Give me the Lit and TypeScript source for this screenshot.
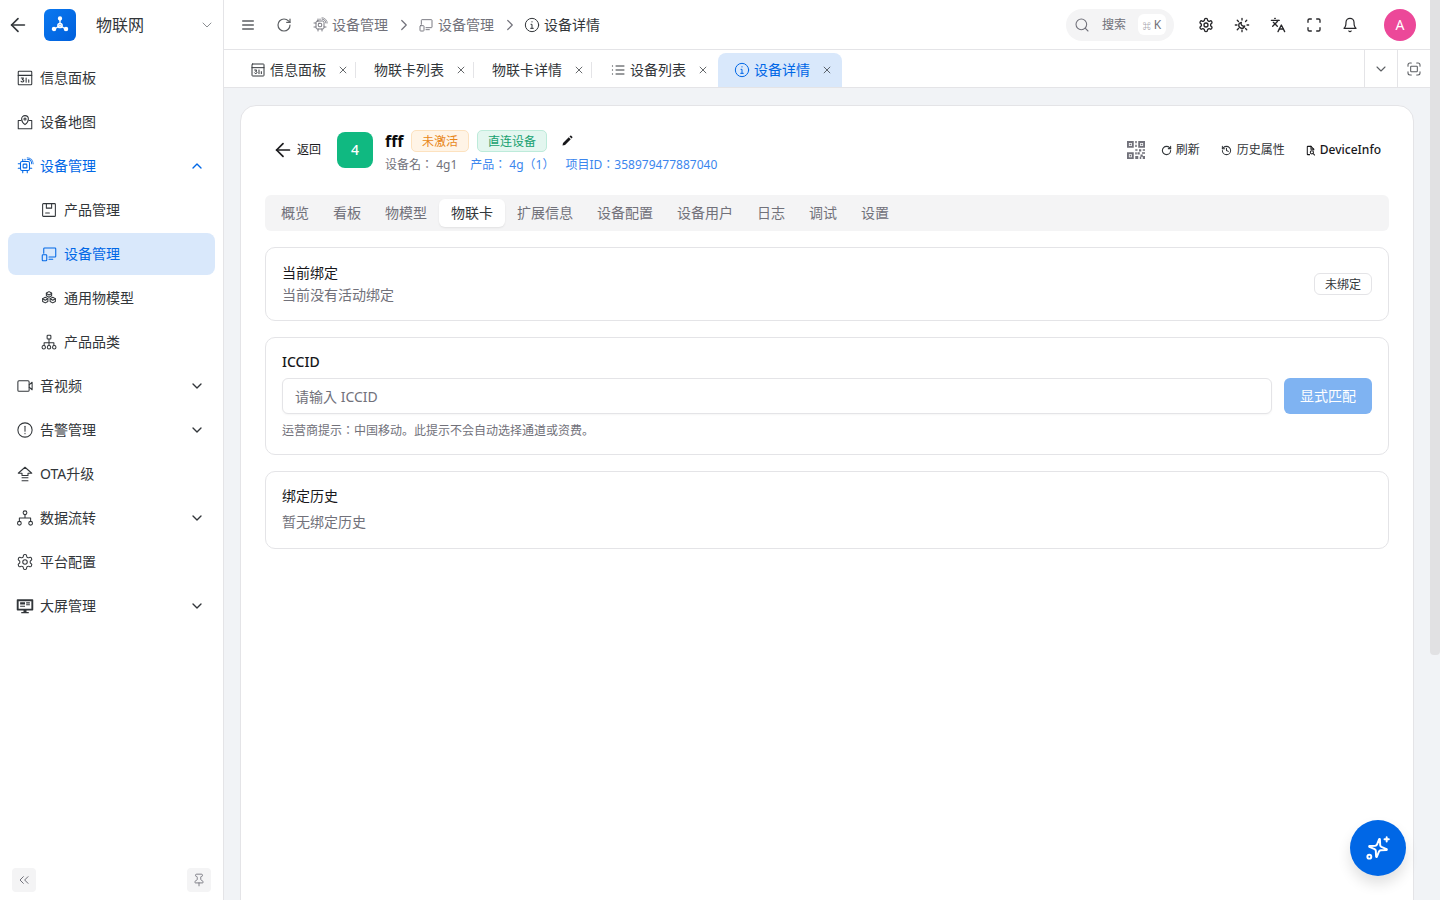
import {css, html, svg, LitElement} from 'lit';
import {customElement} from 'lit/decorators.js';

const icons = {
	back: svg`<path d="M19 12H5"/><path d="m12 19-7-7 7-7"/>`,
	chevronDown: svg`<path d="m6 9 6 6 6-6"/>`,
	chevronUp: svg`<path d="m18 15-6-6-6 6"/>`,
	chevronRight: svg`<path d="m9 6 6 6-6 6"/>`,
	close: svg`<path d="M5 5l14 14"/><path d="M19 5 5 19"/>`,
	menu: svg`<path d="M4 6h16"/><path d="M4 12h16"/><path d="M4 18h16"/>`,
	refresh: svg`<path d="M21 12a9 9 0 1 1-9-9c2.52 0 4.93 1 6.74 2.74L21 8"/><path d="M21 3v5h-5"/>`,
	panel: svg`<rect x="3" y="3" width="18" height="18" rx="1"/><path d="M3 8.5h18"/><path d="M7 12h3l-1.5 2.2c1.6 0 2 .8 2 1.5s-.7 1.6-1.8 1.6-1.7-.5-1.9-1"/><path d="M13.5 12v5.5"/><path d="M17 14.5v3"/>`,
	map: svg`<path d="M12 15.500s-4.500-3.300-4.500-7.500a4.500 4.500 0 0 1 9 0c0 4.200-4.500 7.500-4.500 7.500z"/><circle cx="12" cy="8" r="1.400"/><path d="M6.500 10H3v11h18V10h-3.500"/>`,
	chip: svg`<rect x="6" y="6" width="12" height="12" rx="2"/><rect x="9.500" y="9.500" width="5" height="5" rx="1"/><path d="M9 3v3M9 18v3M15 18v3M3 9h3M3 15h3M18 15h3M12 3v1"/><path d="M15 3a6 6 0 0 1 6 6"/><path d="M15 1a8 8 0 0 1 8 8" opacity=".7"/>`,
	box: svg`<rect x="3.500" y="3.500" width="17" height="17" rx="1"/><path d="M8.500 4v5.500h7V4"/><path d="M7.500 16h5"/>`,
	device: svg`<path d="M5 11V5a1 1 0 0 1 1-1h14a1 1 0 0 1 1 1v10a1 1 0 0 1-1 1h-8"/><path d="M12 19h5"/><rect x="3" y="13" width="6" height="8" rx="1"/>`,
	cubes: svg`<path d="M12 3.500l3.500 1.800v3.800L12 11 8.500 9.100V5.300z"/><path d="M7 11l3.500 1.800v3.800L7 18.500l-3.500-1.900v-3.800z"/><path d="M17 11l3.500 1.800v3.800L17 18.500l-3.500-1.900v-3.800z"/><path d="M3.500 13 7 15l3.500-2M13.500 13l3.500 2 3.500-2M8.500 6 12 8l3.500-2"/>`,
	tree: svg`<rect x="9.500" y="3" width="5" height="5" rx="1"/><path d="M12 8v5M5.500 16.500V13h13v3.500M12 13v3.500"/><circle cx="5" cy="19" r="2.300"/><circle cx="12" cy="19" r="2.300"/><circle cx="19" cy="19" r="2.300"/>`,
	video: svg`<rect x="2.500" y="5" width="15" height="14" rx="1.500"/><path d="M17.500 10.500 21.500 7v10l-4-3.500"/>`,
	alert: svg`<circle cx="12" cy="12" r="9.500"/><path d="M12 7v6.500"/><path d="M12 16.500v.5"/>`,
	ota: svg`<path d="M12 3 3 11h5v3h8v-3h5z"/><path d="M8 17h8"/><path d="M8 21h8"/>`,
	flow: svg`<circle cx="12" cy="5" r="2.500"/><circle cx="4.500" cy="19" r="2.500"/><circle cx="19.500" cy="19" r="2.500"/><path d="M12 7.500V12M4.500 16.500V12h15v4.500"/>`,
	gear: svg`<path d="M12.220 2h-.44a2 2 0 0 0-2 2v.18a2 2 0 0 1-1 1.730l-.43.25a2 2 0 0 1-2 0l-.15-.08a2 2 0 0 0-2.730.73l-.22.38a2 2 0 0 0 .73 2.730l.15.1a2 2 0 0 1 1 1.720v.51a2 2 0 0 1-1 1.740l-.15.09a2 2 0 0 0-.73 2.730l.22.38a2 2 0 0 0 2.730.73l.15-.08a2 2 0 0 1 2 0l.43.25a2 2 0 0 1 1 1.730V20a2 2 0 0 0 2 2h.44a2 2 0 0 0 2-2v-.18a2 2 0 0 1 1-1.730l.43-.25a2 2 0 0 1 2 0l.15.08a2 2 0 0 0 2.730-.73l.22-.39a2 2 0 0 0-.73-2.730l-.15-.08a2 2 0 0 1-1-1.740v-.5a2 2 0 0 1 1-1.740l.15-.09a2 2 0 0 0 .73-2.730l-.22-.38a2 2 0 0 0-2.730-.73l-.15.08a2 2 0 0 1-2 0l-.43-.25a2 2 0 0 1-1-1.730V4a2 2 0 0 0-2-2z"/><circle cx="12" cy="12" r="3"/>`,
	screen: svg`<path fill="currentColor" stroke="none" fill-rule="evenodd" d="M2 3h20a1 1 0 0 1 1 1v13a1 1 0 0 1-1 1h-8v2h3v1.500H7V20h3v-2H2a1 1 0 0 1-1-1V4a1 1 0 0 1 1-1zm1.500 2.500v10h17v-10zM5.500 7h6.500v3H5.500zm8 0h5v1.500h-5zm0 2.500h5V11h-5zM5.500 11.500h6.500V13H5.500z"/>`,
	info: svg`<circle cx="12" cy="12" r="10"/><path d="M10.500 11H12v6"/><path d="M10 17h4"/><path d="M12 7v.5"/>`,
	list: svg`<path d="M9 6h12M9 12h12M9 18h12"/><path d="M3.500 6h.5M3.500 12h.5M3.500 18h.5"/>`,
	search: svg`<circle cx="11" cy="11" r="8"/><path d="m21 21-4.300-4.300"/>`,
	sun: svg`<path d="M12 2v2.500M12 19.500V22M4.900 4.900l1.800 1.800M17.300 17.300l1.800 1.800M2 12h2.500M19.500 12H22M4.900 19.100l1.800-1.800M17.300 6.700l1.800-1.800"/><path d="M11 8a4.500 4.500 0 1 0 5 5.500A4 4 0 0 1 11 8z"/>`,
	lang: svg`<path d="m5 8 6 6"/><path d="m4 14 6-6 2-3"/><path d="M2 5h12"/><path d="M7 2h1"/><path d="m22 22-5-10-5 10"/><path d="M14 18h6"/>`,
	fullscreen: svg`<path d="M8 3H5a2 2 0 0 0-2 2v3"/><path d="M21 8V5a2 2 0 0 0-2-2h-3"/><path d="M3 16v3a2 2 0 0 0 2 2h3"/><path d="M16 21h3a2 2 0 0 0 2-2v-3"/>`,
	bell: svg`<path d="M6 8a6 6 0 0 1 12 0c0 7 3 9 3 9H3s3-2 3-9"/><path d="M10.300 21a1.940 1.940 0 0 0 3.400 0"/>`,
	capture: svg`<path d="M3 8V6a3 3 0 0 1 3-3h2M16 3h2a3 3 0 0 1 3 3v2M21 16v2a3 3 0 0 1-3 3h-2M8 21H6a3 3 0 0 1-3-3v-2"/><rect x="7" y="8" width="10" height="8" rx="1"/>`,
	pencil: svg`<path fill="currentColor" stroke="none" d="M3 21l1-5L15.500 4.500l4 4L8 20zM17 3l1.500-1.500a1.400 1.400 0 0 1 2 0l2 2a1.400 1.400 0 0 1 0 2L21 7z"/>`,
	history: svg`<path d="M3 12a9 9 0 1 0 9-9 9.750 9.750 0 0 0-6.740 2.740L3 8"/><path d="M3 3v5h5"/><path d="M12 7v5l4 2"/>`,
	doc: svg`<path d="M13 3H6a1 1 0 0 0-1 1v16a1 1 0 0 0 1 1h4"/><path d="M13 3l6 6v2"/><path d="M13 3v6h6"/><circle cx="15" cy="16" r="3.500"/><path d="m18 19 3 3"/>`,
	doubleLeft: svg`<path d="m11 17-5-5 5-5"/><path d="m18 17-5-5 5-5"/>`,
	pin: svg`<path d="M12 17v5"/><path d="M9 10.760a2 2 0 0 1-1.110 1.790l-1.780.9A2 2 0 0 0 5 15.240V16a1 1 0 0 0 1 1h12a1 1 0 0 0 1-1v-.76a2 2 0 0 0-1.110-1.790l-1.780-.9A2 2 0 0 1 15 10.760V7a1 1 0 0 1 1-1 2 2 0 0 0 0-4H8a2 2 0 0 0 0 4 1 1 0 0 1 1 1z"/>`,
	qr: svg`<path fill="currentColor" stroke="none" fill-rule="evenodd" d="M0 0h9v9H0zm2.500 2.500v4h4v-4zM3.500 3.500h2v2h-2zM15 0h9v9h-9zm2.500 2.500v4h4v-4zM18.500 3.500h2v2h-2zM0 15h9v9H0zm2.500 2.500v4h4v-4zM3.500 18.500h2v2h-2zM11 0h2v3h-2zM11 5h2v3h-2zM11 11h3v2h-3zM16 11h3v3h-3zM21 11h3v2h-3zM11 15h2v3h-2zM14 15h3v3h-3zM20 15h4v2h-4zM18 18h3v3h-3zM11 20h4v4h-4zM17 21h2v3h-2zM21 20h3v4h-3z"/>`,
	spark: svg`<g transform="rotate(10 12 12)"><path d="M10.500 15a2 2 0 0 0-1.400-1.400l-5-1.200a.4.400 0 0 1 0-.8l5-1.200A2 2 0 0 0 10.500 9l1.100-5a.4.400 0 0 1 .8 0l1.100 5a2 2 0 0 0 1.400 1.400l5 1.200a.4.400 0 0 1 0 .8l-5 1.200a2 2 0 0 0-1.400 1.400l-1.100 5a.4.400 0 0 1-.8 0z"/></g><path d="M20 2v4M18 4h4"/><circle cx="4" cy="20" r="1.800"/>`,
};

type IconName = keyof typeof icons;

function icon(name: IconName, size = 16, weight = 1.6) {
	return html`<svg class="icon" width=${size} height=${size} viewBox="0 0 24 24" fill="none" stroke="currentColor" stroke-width=${weight} stroke-linecap="round" stroke-linejoin="round">${icons[name]}</svg>`;
}

interface NavItem {
	label: string,
	icon: IconName,
	sub?: boolean,
	active?: boolean,
	open?: boolean,
	current?: boolean,
	caret?: boolean,
}

const nav: NavItem[] = [
	{label: '信息面板', icon: 'panel'},
	{label: '设备地图', icon: 'map'},
	{label: '设备管理', icon: 'chip', active: true, open: true},
	{label: '产品管理', icon: 'box', sub: true},
	{label: '设备管理', icon: 'device', sub: true, current: true},
	{label: '通用物模型', icon: 'cubes', sub: true},
	{label: '产品品类', icon: 'tree', sub: true},
	{label: '音视频', icon: 'video', caret: true},
	{label: '告警管理', icon: 'alert', caret: true},
	{label: 'OTA升级', icon: 'ota'},
	{label: '数据流转', icon: 'flow', caret: true},
	{label: '平台配置', icon: 'gear'},
	{label: '大屏管理', icon: 'screen', caret: true},
];

const openTabs: {label: string, icon?: IconName, active?: boolean}[] = [
	{label: '信息面板', icon: 'panel'},
	{label: '物联卡列表'},
	{label: '物联卡详情'},
	{label: '设备列表', icon: 'list'},
	{label: '设备详情', icon: 'info', active: true},
];

const detailTabs = ['概览', '看板', '物模型', '物联卡', '扩展信息', '设备配置', '设备用户', '日志', '调试', '设置'];

@customElement('app-root')
export class AppRoot extends LitElement {
	protected render() {
		return html`
		<aside class="sidebar">
			<div class="brand">
				<span class="brand-back">${icon('back', 22, 1.8)}</span>
				<span class="logo">
					<svg width="20" height="20" viewBox="0 0 20 20" fill="none" stroke="#fff" stroke-width="1.300">
						<path d="M10 4v5M4.500 14 10 10.500 15.500 14"/>
						<circle cx="10" cy="10.500" r="2.200" fill="#fff" fill-opacity=".5"/>
						<circle cx="10" cy="3.500" r="1.500" fill="#fff"/>
						<circle cx="4" cy="14" r="1.600" fill="#fff"/>
						<circle cx="16" cy="14" r="1.600" fill="#fff"/>
					</svg>
				</span>
				<span class="brand-name">物联网</span>
				<span class="brand-caret">${icon('chevronDown', 16, 1.5)}</span>
			</div>
			<nav class="menu">
				${nav.map((item) => html`
					<div class="item ${item.sub ? 'sub' : ''} ${item.active ? 'active' : ''} ${item.current ? 'current' : ''}">
						${icon(item.icon, 18, 1.4)}
						<span>${item.label}</span>
						${item.caret ? html`<span class="caret">${icon('chevronDown', 16, 2)}</span>` : ''}
						${item.open ? html`<span class="caret">${icon('chevronUp', 16, 2)}</span>` : ''}
					</div>
				`)}
			</nav>
			<div class="side-foot">
				<span class="foot-btn">${icon('doubleLeft', 16, 1.5)}</span>
				<span class="foot-btn">${icon('pin', 14, 1.5)}</span>
			</div>
		</aside>
		<div class="main">
			<header class="topbar">
				<span class="top-icon first">${icon('menu', 16, 2)}</span>
				<span class="top-icon">${icon('refresh', 16, 1.8)}</span>
				<div class="crumbs">
					<span class="crumb">${icon('chip', 16, 1.4)}设备管理</span>
					<span class="sep">${icon('chevronRight', 18, 1.6)}</span>
					<span class="crumb">${icon('device', 16, 1.4)}设备管理</span>
					<span class="sep">${icon('chevronRight', 18, 1.6)}</span>
					<span class="crumb last">${icon('info', 16, 1.5)}设备详情</span>
				</div>
				<div class="search">
					${icon('search', 16, 1.6)}
					<span class="search-label">搜索</span>
					<span class="kbd"><small>⌘</small> K</span>
				</div>
				<div class="tools">
					${icon('gear', 16, 2)}
					${icon('sun', 16, 2)}
					${icon('lang', 16, 2)}
					${icon('fullscreen', 16, 2)}
					${icon('bell', 16, 1.8)}
				</div>
				<span class="avatar">A</span>
			</header>
			<div class="tabbar">
				<div class="tabs">
					${openTabs.map((tab) => html`
						<div class="tab ${tab.active ? 'on' : ''}">
							${tab.icon ? icon(tab.icon, 16, 1.5) : ''}
							<span>${tab.label}</span>
							<span class="x">${icon('close', 10, 1.8)}</span>
						</div>
					`)}
				</div>
				<span class="tab-tool">${icon('chevronDown', 16, 1.6)}</span>
				<span class="tab-tool">${icon('capture', 16, 1.6)}</span>
			</div>
			<main class="content">
				<section class="page">
					<div class="head">
						<span class="return">${icon('back', 22, 1.9)}<span>返回</span></span>
						<span class="count">4</span>
						<div class="title-block">
							<div class="title-row">
								<b class="name">fff</b>
								<span class="chip orange">未激活</span>
								<span class="chip green">直连设备</span>
								<span class="pencil">${icon('pencil', 12)}</span>
							</div>
							<div class="meta">
								<span class="meta-grey">设备名： 4g1</span>
								<span class="meta-blue">产品： 4g（1）</span>
								<span class="meta-blue">项目ID：358979477887040</span>
							</div>
						</div>
						<div class="actions">
							<span class="qr">${icon('qr', 18)}</span>
							<span class="act">${icon('refresh', 11, 2.4)}刷新</span>
							<span class="act wide">${icon('history', 11, 2.2)}历史属性</span>
							<span class="act strong">${icon('doc', 11, 2.2)}DeviceInfo</span>
						</div>
					</div>
					<div class="detail-tabs">
						${detailTabs.map((t) => html`<span class="dtab ${t === '物联卡' ? 'on' : ''}">${t}</span>`)}
					</div>
					<div class="panel bound">
						<div>
							<div class="panel-title">当前绑定</div>
							<div class="panel-sub">当前没有活动绑定</div>
						</div>
						<span class="state">未绑定</span>
					</div>
					<div class="panel iccid">
						<div class="panel-title strong">ICCID</div>
						<div class="field">
							<input placeholder="请输入 ICCID">
							<button>显式匹配</button>
						</div>
						<div class="hint">运营商提示：中国移动。此提示不会自动选择通道或资费。</div>
					</div>
					<div class="panel history">
						<div class="panel-title">绑定历史</div>
						<div class="panel-sub">暂无绑定历史</div>
					</div>
				</section>
			</main>
		</div>
		<div class="scrollbar"><div class="thumb"></div></div>
		<button class="fab">${icon('spark', 26, 1.8)}</button>
		`;
	}

	static styles = css`
		:host {
			display: flex;
			height: 900px;
			overflow: hidden;
			position: relative;
			background: #f1f3f6;
			color: #32363a;
			font-family: "Noto Sans", "Noto Sans CJK JP", sans-serif;
			font-size: 14px;
			line-height: 20px;
		}
		.icon { flex: none; display: block; }

		.sidebar {
			width: 223px;
			flex: none;
			background: #fff;
			border-right: 1px solid #e4e4e7;
			display: flex;
			flex-direction: column;
		}
		.brand {
			height: 50px;
			display: flex;
			align-items: center;
			padding-left: 7px;
		}
		.brand-back { width: 37px; color: #32363a; }
		.logo {
			width: 32px;
			height: 32px;
			border-radius: 6px;
			background: linear-gradient(135deg, #0a78f0, #0060dc);
			display: flex;
			align-items: center;
			justify-content: center;
		}
		.brand-name { font-size: 16px; line-height: 24px; margin-left: 20px; flex: 1; }
		.brand-caret { color: #8b8e92; margin-right: 8px; }
		.menu {
			padding: 7px 8px 0;
			display: flex;
			flex-direction: column;
			gap: 2px;
			flex: 1;
		}
		.item {
			height: 42px;
			display: flex;
			align-items: center;
			gap: 6px;
			padding-left: 8px;
			border-radius: 8px;
			flex: none;
		}
		.item.sub { padding-left: 32px; }
		.item.active { color: #0067e6; }
		.item.current { color: #0067e6; background: #d9e8fb; }
		.caret { margin-left: auto; margin-right: 10px; }
		.side-foot {
			display: flex;
			justify-content: space-between;
			padding: 0 12px 8px;
		}
		.foot-btn {
			width: 24px;
			height: 24px;
			border-radius: 4px;
			background: #f4f4f5;
			color: #71717a;
			display: flex;
			align-items: center;
			justify-content: center;
		}

		.main { flex: 1; min-width: 0; display: flex; flex-direction: column; }
		.topbar {
			height: 49px;
			flex: none;
			background: #fff;
			border-bottom: 1px solid #e4e4e7;
			display: flex;
			align-items: center;
		}
		.top-icon { width: 36px; display: flex; justify-content: center; color: #5c5f63; }
		.top-icon.first { margin-left: 6px; }
		.crumbs { display: flex; align-items: center; margin-left: 11px; flex: 1; }
		.crumb { display: flex; align-items: center; gap: 5px; color: #71717a; }
		.crumb .icon { margin: 0 -1px; }
		.crumb.last { color: #32363a; }
		.sep { width: 31px; display: flex; justify-content: center; color: #71717a; }
		.search {
			width: 108px;
			height: 32px;
			box-sizing: border-box;
			border-radius: 16px;
			background: #f4f4f5;
			display: flex;
			align-items: center;
			padding-left: 8px;
			color: #71717a;
		}
		.search-label { font-size: 12px; margin-left: 12px; }
		.kbd {
			margin-left: 12px;
			width: 28px;
			height: 21px;
			background: #fff;
			border-radius: 6px;
			font-size: 12px;
			text-align: center;
			line-height: 21px;
			white-space: nowrap;
		}
		.kbd small { font-size: 8px; }
		.tools {
			display: flex;
			gap: 20px;
			margin-left: 24px;
			color: #27272a;
		}
		.avatar {
			width: 32px;
			height: 32px;
			border-radius: 50%;
			background: #ec4899;
			color: #fff;
			margin: 0 14px 0 26px;
			display: flex;
			align-items: center;
			justify-content: center;
		}

		.tabbar {
			height: 37px;
			flex: none;
			background: #fff;
			border-bottom: 1px solid #e4e4e7;
			display: flex;
			align-items: stretch;
		}
		.tabs { flex: 1; display: flex; padding-left: 9px; align-items: flex-end; }
		.tab {
			height: 34px;
			display: flex;
			align-items: center;
			padding: 0 0 0 18px;
			gap: 5px;
			position: relative;
			flex: none;
		}
		.tab .icon { margin: 0 -1px; }
		.tab .x .icon { margin: 0; }
		.tab .x { margin: 0 8px 0 7px; color: #32363a; }
		.tab:not(.on)::after {
			content: '';
			position: absolute;
			right: 0;
			top: 9px;
			height: 16px;
			width: 1px;
			background: #e4e4e7;
		}
		.tab:nth-child(4)::after { display: none; }
		.tab:nth-child(4) .x { margin-right: 10px; }
		.tab:nth-child(4) { padding-left: 19px; }
		.tab.on {
			background: #d9e8fb;
			color: #0067e6;
			border-radius: 8px 8px 0 0;
			padding-left: 17px;
		}
		.tab.on .x { color: #32363a; margin-right: 10px; }
		.tab-tool {
			width: 32px;
			border-left: 1px solid #e4e4e7;
			display: flex;
			align-items: center;
			justify-content: center;
			color: #5c5f63;
		}

		.content { flex: 1; min-height: 0; padding: 17px 16px 0 16px; overflow: hidden; }
		.page {
			height: 900px;
			box-sizing: border-box;
			background: #fff;
			border: 1px solid #e4e4e7;
			border-radius: 16px;
			padding: 24px 24px 0;
		}
		.head { display: flex; align-items: center; height: 40px; margin-bottom: 25px; }
		.return { display: flex; align-items: center; gap: 3px; font-size: 12px; margin-left: 7px; color: #1c1c1f; }
		.count {
			width: 36px;
			height: 36px;
			border-radius: 8px;
			background: #10b981;
			color: #fff;
			margin-left: 16px;
			display: flex;
			align-items: center;
			justify-content: center;
			font-weight: 500;
		}
		.title-block { margin-left: 12px; flex: 1; align-self: flex-start; }
		.title-row { display: flex; align-items: center; height: 22px; }
		.name { font-size: 16px; color: #09090b; font-weight: 700; width: 26px; }
		.chip {
			height: 22px;
			box-sizing: border-box;
			line-height: 21px;
			border-radius: 5px;
			font-size: 12px;
			padding: 0 10px;
			margin-right: 8px;
			border: 1px solid;
		}
		.chip.orange { color: #e8871a; background: #fff4e6; border-color: #fde2bf; }
		.chip.green { color: #16a070; background: #e3f6ef; border-color: #bdebda; }
		.pencil { margin-left: 6px; color: #18181b; }
		.meta { display: flex; font-size: 12px; margin-top: 4px; height: 18px; line-height: 18px; }
		.meta-grey { color: #71717a; margin-right: 13px; }
		.meta-blue { color: #3b86ee; margin-right: 11px; }
		.actions { display: flex; align-items: center; margin-right: 8px; }
		.qr { color: #71717a; margin-right: 16px; }
		.act { display: flex; align-items: center; gap: 4px; font-size: 12px; margin-right: 21px; color: #32363a; }
		.act.wide { gap: 5px; margin-right: 20px; }
		.act:last-child { margin-right: 0; }
		.act.strong { font-weight: 500; color: #18181b; }

		.detail-tabs {
			height: 36px;
			box-sizing: border-box;
			background: #f4f4f5;
			border-radius: 6px;
			padding: 4px;
			display: flex;
			margin-bottom: 16px;
		}
		.dtab {
			padding: 0 12px;
			line-height: 28px;
			color: #71717a;
			border-radius: 6px;
		}
		.dtab.on { background: #fff; color: #32363a; box-shadow: 0 1px 2px rgba(0, 0, 0, .08); }

		.panel {
			border: 1px solid #e4e4e7;
			border-radius: 10px;
			padding: 0 16px;
			margin-bottom: 16px;
		}
		.panel-title { color: #18181b; line-height: 22px; }
		.panel-title.strong { font-weight: 500; }
		.panel-sub { color: #71717a; line-height: 22px; }
		.bound {
			height: 74px;
			box-sizing: border-box;
			display: flex;
			align-items: center;
			justify-content: space-between;
		}
		.state {
			height: 22px;
			box-sizing: border-box;
			line-height: 21px;
			border: 1px solid #e4e4e7;
			border-radius: 6px;
			font-size: 12px;
			padding: 0 10px;
		}
		.iccid { height: 118px; box-sizing: border-box; padding-top: 13px; }
		.field { display: flex; gap: 12px; margin-top: 5px; }
		.field input {
			flex: 1;
			min-width: 0;
			height: 36px;
			box-sizing: border-box;
			border: 1px solid #e4e4e7;
			border-radius: 6px;
			padding: 0 12px;
			font: inherit;
			outline: none;
			box-shadow: 0 1px 2px rgba(0, 0, 0, .04);
		}
		.field input::placeholder { color: #71717a; opacity: 1; }
		.field button {
			width: 88px;
			height: 36px;
			border: none;
			border-radius: 6px;
			background: #7fb3f2;
			color: #fff;
			font: inherit;
		}
		.hint { font-size: 12px; color: #71717a; margin-top: 8px; line-height: 18px; }
		.history { height: 78px; box-sizing: border-box; padding-top: 13px; }
		.history .panel-sub { margin-top: 4px; }

		.scrollbar { width: 10px; flex: none; background: #f1f3f6; }
		.thumb { height: 655px; background: #e1e1e3; border-radius: 0 0 4px 4px; }
		.fab {
			position: absolute;
			right: 34px;
			bottom: 24px;
			width: 56px;
			height: 56px;
			border: none;
			border-radius: 50%;
			background: #0067e6;
			color: #fff;
			display: flex;
			align-items: center;
			justify-content: center;
			box-shadow: 0 8px 14px rgba(0, 0, 0, .12);
		}
	`;
}
